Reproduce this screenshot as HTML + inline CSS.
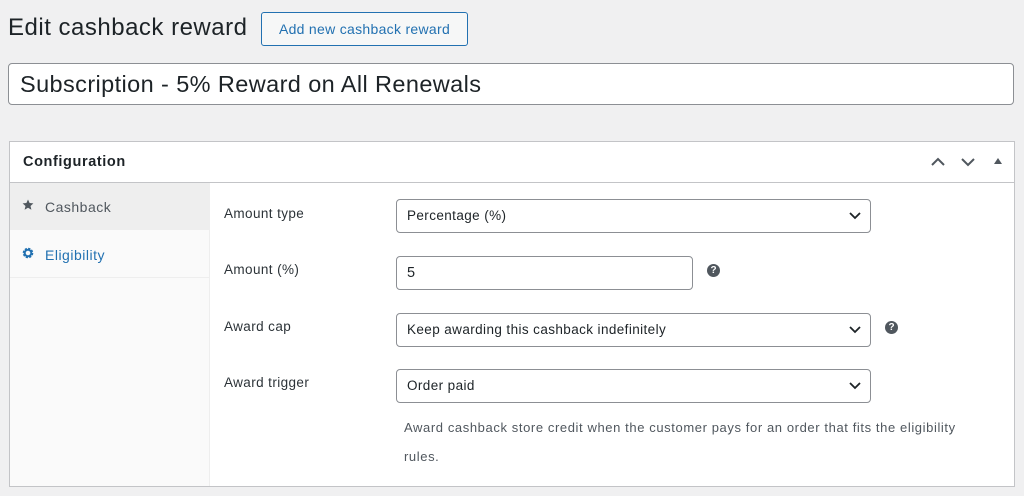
<!DOCTYPE html>
<html><head><style>
*{box-sizing:border-box;margin:0;padding:0}
body{width:1024px;height:496px;background:#f0f0f1;font-family:"Liberation Sans",sans-serif;color:#1d2327;position:relative;overflow:hidden}
.a{position:absolute}
h1{position:absolute;left:8px;top:14px;font-size:24px;font-weight:400;letter-spacing:0.5px}
.btn{left:261px;top:12px;width:207px;height:34px;border:1px solid #2271b1;border-radius:3px;color:#2271b1;font-size:14px;line-height:32px;text-align:center;background:#f6f7f7;letter-spacing:0.3px}
.title{left:8px;top:63px;width:1006px;height:42px;border:1px solid #8c8f94;border-radius:4px;background:#fff;font-size:23.5px;padding-left:11px;line-height:40px;letter-spacing:0.4px}
.box{left:9px;top:141px;width:1006px;height:346px;border:1px solid #c3c4c7;background:#fff}
.hd{left:0;top:0;width:1004px;height:41px;border-bottom:1px solid #c3c4c7;font-weight:700;font-size:14.5px;padding:12px 0 0 13px;letter-spacing:0.6px}
.side{left:0;top:41px;width:200px;height:303px;background:#fafafa;border-right:1px solid #eee}
.tab{left:0;width:200px;height:47px;font-size:14px;padding:16px 0 0 35px;letter-spacing:0.5px}
.lbl{left:214px;font-size:13.5px;color:#2c3338;letter-spacing:0.4px}
.sel{left:386px;width:475px;height:34px;border:1px solid #8c8f94;border-radius:4px;font-size:13.5px;padding-left:10px;line-height:32px;letter-spacing:0.4px}
.sel svg{position:absolute;right:9px;top:11px}
.q{width:13px;height:13px;border-radius:50%;background:#50575e;color:#fff;font-size:10px;font-weight:700;text-align:center;line-height:13px}
</style></head><body>
<h1>Edit cashback reward</h1>
<div class="a btn">Add new cashback reward</div>
<div class="a title">Subscription - 5% Reward on All Renewals</div>
<div class="a box">
<div class="a hd">Configuration</div>
<svg class="a" style="left:920px;top:14px" width="16" height="12"><path d="M2 9l6-6 6 6" stroke="#50575e" stroke-width="2" fill="none"/></svg>
<svg class="a" style="left:950px;top:14px" width="16" height="12"><path d="M2 3l6 6 6-6" stroke="#50575e" stroke-width="2" fill="none"/></svg>
<svg class="a" style="left:983px;top:15px" width="10" height="8"><path d="M1 7l4-6 4 6z" fill="#50575e"/></svg>
<div class="a side">
<div class="a tab" style="top:0;background:#eee;color:#50575e">Cashback</div>
<div class="a tab" style="top:48px;color:#2271b1;border-bottom:1px solid #eee">Eligibility</div>
</div>
<svg class="a" style="left:12px;top:57px" width="12" height="12"><path d="M6 0.5l1.6 3.5 3.8.4-2.9 2.6.9 3.8L6 8.8 2.6 10.8l.9-3.8L.6 4.4l3.8-.4z" fill="#50575e"/></svg>
<svg class="a" style="left:12px;top:105px" width="12" height="12"><circle cx="6" cy="6" r="4" fill="none" stroke="#2271b1" stroke-width="2.6" stroke-dasharray="2 1.14"/><circle cx="6" cy="6" r="3.3" fill="none" stroke="#2271b1" stroke-width="2"/></svg>
<div class="a lbl" style="top:64px">Amount type</div>
<div class="a sel" style="top:57px">Percentage (%)<svg width="12" height="10"><path d="M1 2l5 5 5-5" stroke="#1d2327" stroke-width="1.8" fill="none"/></svg></div>
<div class="a lbl" style="top:120px">Amount (%)</div>
<div class="a sel" style="top:114px;width:297px;font-size:14.5px">5</div>
<div class="a q" style="left:697px;top:122px">?</div>
<div class="a lbl" style="top:177px">Award cap</div>
<div class="a sel" style="top:171px">Keep awarding this cashback indefinitely<svg width="12" height="10"><path d="M1 2l5 5 5-5" stroke="#1d2327" stroke-width="1.8" fill="none"/></svg></div>
<div class="a q" style="left:875px;top:179px">?</div>
<div class="a lbl" style="top:233px">Award trigger</div>
<div class="a sel" style="top:227px">Order paid<svg width="12" height="10"><path d="M1 2l5 5 5-5" stroke="#1d2327" stroke-width="1.8" fill="none"/></svg></div>
<div class="a" style="left:394px;top:271px;width:585px;font-size:13px;line-height:29px;color:#50575e;letter-spacing:0.6px">Award cashback store credit when the customer pays for an order that fits the eligibility rules.</div>
</div>
</body></html>
